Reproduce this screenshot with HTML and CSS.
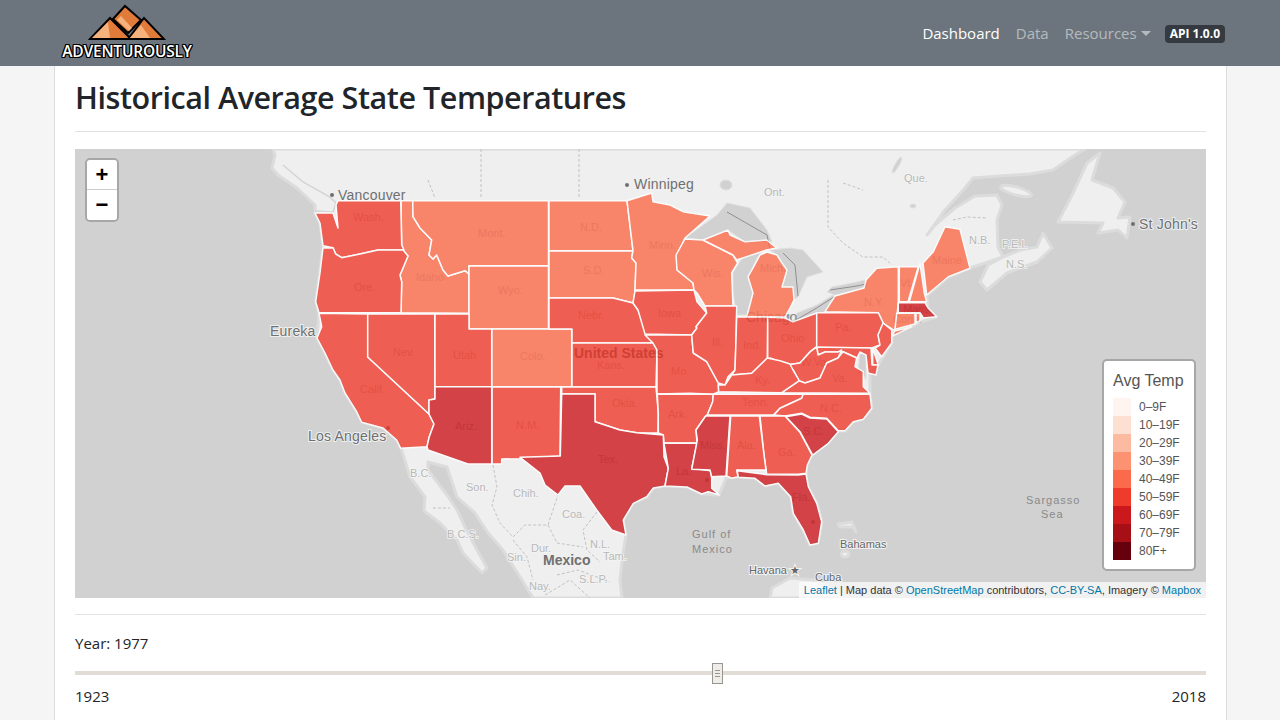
FILE: index.html
```html
<!DOCTYPE html>
<html lang="en">
<head>
    <meta charset="UTF-8">
    <meta name="viewport" content="width=device-width, initial-scale=1.0">
    <title>Historical Average State Temperatures</title>
    <link rel="stylesheet" href="styles.css">
</head>
<body>
    <!-- Top navigation -->
    <nav class="navbar">
        <a class="brand" href="#">
            <svg class="brand-mark" viewBox="88 4 78 37" width="78" height="37">
                <polygon class="peak" points="113,19 125,6 141,20 128,33"/>
                <polygon class="peak-light" points="117,20 121,16 132,28 129,31"/>
                <polygon class="peak" points="90,39 110,18 131,39"/>
                <polygon class="peak-light" points="92,38 108,22 110,38"/>
                <polygon class="peak" points="128,39 144,18 164,39"/>
                <polygon class="peak-light" points="130,38 141,25 150,38"/>
            </svg>
            <span class="brand-name">ADVENTUROUSLY</span>
        </a>
        <ul class="nav-links">
            <li><a class="nav-link active" href="#">Dashboard</a></li>
            <li><a class="nav-link" href="#">Data</a></li>
            <li><a class="nav-link dropdown" href="#">Resources</a></li>
            <li><span class="badge">API 1.0.0</span></li>
        </ul>
    </nav>

    <main class="content">
        <h1>Historical Average State Temperatures</h1>
        <hr class="rule-top">

        <!-- Choropleth map -->
        <div class="map">
            <svg class="map-svg" viewBox="75 149 1131 449" width="1131" height="449">
                <g class="land">
                    <polygon points="273,149 275,155 272,168 278,175 297,188 315,205 315,213 320,223 323,246 316,300 319,313 317,338 325,353 333,370 340,380 345,393 357,412 362,422 383,428 397,440 401,448 410,477 425,497 424,511 440,523 457,540 463,553 482,573 487,568 477,550 465,527 457,510 447,495 428,470 428,462 447,467 457,497 475,513 488,533 503,550 520,577 533,598 622,598 620,580 623,553 626,535 623,520 633,503 647,497 653,488 665,486 687,487 702,494 719,495 726,478 738,477 755,478 765,486 778,483 791,497 793,513 803,530 810,545 818,543 822,522 817,503 808,487 806,474 807,465 812,455 828,443 838,431 845,431 853,422 863,419 872,408 870,394 870,372 878,365 883,357 892,343 892,330 911,327 920,322 936,317 928,308 927,296 948,277 970,268 988,262 1003,257 998,247 997,220 1002,205 997,195 975,196 955,208 935,225 927,235 945,210 965,188 973,178 1000,176 1030,174 1053,170 1075,155 1085,149"/>
                    <polygon points="980,282 987,290 1007,273 1037,262 1052,248 1043,233 1037,247 1020,250 1003,257 988,265"/>
                    <polygon points="1087,163 1100,153 1092,180 1113,188 1125,202 1118,218 1130,217 1127,238 1118,230 1098,233 1103,223 1058,222 1073,193"/>
                    <ellipse cx="1016" cy="191" rx="16" ry="4" transform="rotate(15 1016 191)"/>
                    <polygon points="770,598 772,588 790,578 815,580 835,590 850,598"/>
                    <polygon points="838,524 852,522 856,532 853,527 840,527"/>
                    <ellipse cx="845" cy="554" rx="4" ry="3"/>
                </g>

                <!-- Lakes and straits -->
                <g class="water">
                    <polygon points="685,238 717,215 727,203 750,208 767,230 772,242 745,242 728,230 703,240"/>
                    <polygon points="770,250 790,248 803,250 823,272 807,277 798,297 793,300 793,287 782,287 787,270 782,263 777,255"/>
                    <polygon points="733,272 743,257 763,250 757,258 748,277 753,293 747,315 737,315 733,293"/>
                    <polygon points="793,322 797,313 817,305 833,295 835,297 825,312 817,313"/>
                    <polygon points="827,292 832,287 857,282 865,280 867,287 857,290 835,295"/>
                    <circle cx="789" cy="317" r="3"/>
                    <polygon points="860,350 866,352 866,380 862,372 858,375"/>
                    <ellipse cx="726" cy="185" rx="6" ry="5"/>
                    <ellipse cx="913" cy="206" rx="3" ry="2"/>
                    <ellipse cx="897" cy="165" rx="2" ry="9" transform="rotate(30 897 165)"/>
                </g>
                <polyline class="strait" points="283,165 303,182 330,197 336,203 333,212 315,211"/>

                <!-- Borders that show through the tiles -->
                <g class="lake-line">
                    <polyline points="727,212 767,235 770,250"/>
                    <polyline points="783,253 795,265 798,296"/>
                    <polyline points="796,320 815,309 834,297"/>
                    <polyline points="830,290 857,286 866,284"/>
                </g>
                <g class="border-line">
                    <polyline points="481,149 481,198"/>
                    <polyline points="579,149 579,198"/>
                    <polyline points="428,180 435,198"/>
                    <polyline points="828,180 828,227 843,243 863,257 883,257 892,265"/>
                    <polyline points="843,183 863,190"/>
                    <polyline points="953,220 967,217 987,218"/>
                    <polyline points="493,465 497,487 492,505 500,523 513,537 525,525 548,525 558,495"/>
                    <polyline points="597,512 583,530 587,550 600,562"/>
                    <polyline points="548,525 557,543 583,547"/>
                    <polyline points="433,508 450,508"/>
                    <polyline points="513,540 527,557 533,580"/>
                    <polyline points="557,575 578,570 610,582"/>
                    <polyline points="545,595 570,580 590,598"/>
                </g>

                <!-- Tile labels, drawn before the states so the fill tints them -->
                <g class="place">
                    <circle cx="332" cy="195" r="2"/>
                    <circle cx="627" cy="185" r="2"/>
                    <circle cx="1133" cy="224" r="2"/>
                    <text x="338" y="200">Vancouver</text>
                    <text x="634" y="189">Winnipeg</text>
                    <text x="1139" y="229">St John's</text>
                    <text x="270" y="336">Eureka</text>
                    <text x="308" y="441">Los Angeles</text>
                </g>
                <g class="sea">
                    <text x="692" y="538">Gulf of</text>
                    <text x="692" y="553">Mexico</text>
                    <text x="1026" y="504">Sargasso</text>
                    <text x="1041" y="518">Sea</text>
                </g>
                <g class="town">
                    <text x="840" y="548">Bahamas</text>
                    <text x="749" y="574">Havana ★</text>
                    <text x="815" y="581">Cuba</text>
                </g>
                <text class="country" x="543" y="565">Mexico</text>
                <text class="country country-us" x="574" y="358">United States</text>
                <text class="country country-city" x="746" y="322">Chicago</text>
                <g class="region">
                    <text x="764" y="196">Ont.</text>
                    <text x="904" y="182">Que.</text>
                    <text x="969" y="244">N.B.</text>
                    <text x="1002" y="248">P.E.I.</text>
                    <text x="1006" y="268">N.S.</text>
                    <text x="466" y="491">Son.</text>
                    <text x="513" y="497">Chih.</text>
                    <text x="410" y="477">B.C.</text>
                    <text x="562" y="518">Coa.</text>
                    <text x="447" y="538">B.C.S.</text>
                    <text x="531" y="552">Dur.</text>
                    <text x="590" y="548">N.L.</text>
                    <text x="603" y="560">Tam.</text>
                    <text x="507" y="561">Sin.</text>
                    <text x="579" y="583">S.L.P.</text>
                    <text x="529" y="590">Nay.</text>
                </g>
                <g class="region region-us">
                    <text x="353" y="221">Wash.</text>
                    <text x="478" y="237">Mont.</text>
                    <text x="580" y="231">N.D.</text>
                    <text x="583" y="274">S.D.</text>
                    <text x="649" y="249">Minn.</text>
                    <text x="702" y="277">Wis.</text>
                    <text x="760" y="272">Mich.</text>
                    <text x="354" y="291">Ore.</text>
                    <text x="416" y="281">Idaho</text>
                    <text x="498" y="294">Wyo.</text>
                    <text x="578" y="319">Nebr.</text>
                    <text x="658" y="317">Iowa</text>
                    <text x="712" y="346">Ill.</text>
                    <text x="743" y="349">Ind.</text>
                    <text x="781" y="342">Ohio</text>
                    <text x="835" y="331">Pa.</text>
                    <text x="864" y="306">N.Y.</text>
                    <text x="900" y="287">Vt.</text>
                    <text x="932" y="264">Maine</text>
                    <text x="903" y="313">Mass.</text>
                    <text x="893" y="323">Conn.</text>
                    <text x="360" y="393">Calif.</text>
                    <text x="393" y="356">Nev.</text>
                    <text x="453" y="359">Utah</text>
                    <text x="520" y="360">Colo.</text>
                    <text x="597" y="369">Kans.</text>
                    <text x="671" y="375">Mo.</text>
                    <text x="755" y="384">Ky.</text>
                    <text x="801" y="366">W.Va.</text>
                    <text x="832" y="382">Va.</text>
                    <text x="742" y="406">Tenn.</text>
                    <text x="820" y="412">N.C.</text>
                    <text x="803" y="435">S.C.</text>
                    <text x="455" y="430">Ariz.</text>
                    <text x="516" y="429">N.M.</text>
                    <text x="612" y="407">Okla.</text>
                    <text x="668" y="418">Ark.</text>
                    <text x="598" y="463">Tex.</text>
                    <text x="676" y="475">La.</text>
                    <text x="700" y="449">Miss.</text>
                    <text x="737" y="449">Ala.</text>
                    <text x="778" y="456">Ga.</text>
                    <text x="792" y="501">Fla.</text>
                </g>

                <g class="states">
                    <!-- 30-39F -->
                    <g class="temp-30">
                        <polygon points="401,200.7 412.7,200.7 413,216.7 420,228 431.7,240 429,255 433,259 436.7,255 443,270 448,276 465,270.7 469,274 469,313.3 401,312.7 401.7,282 400,275 408,256 403,250 401.7,245"/>
                        <polygon points="412.7,200.7 548.5,200.7 548.5,265.7 469,265.7 469,274 465,270.7 448,276 443,270 436.7,255 433,259 429,255 431.7,240 420,228 413,216.7"/>
                        <polygon points="469,266 548.5,266 548.5,329 469,329"/>
                        <polygon points="491.7,329 571.7,329 571.7,386.7 491.7,386.7"/>
                        <polygon points="549,200.7 627,200.7 633,250.7 549,250.7"/>
                        <polygon points="549,251 633,251 631.7,258 636,263 635,291 633,303 613,298 549,298"/>
                        <polygon points="627,200.7 651.7,193 653,201.7 670,205 683,211.7 710,216 685,238 677,255 677,270 693,283 694,290 635,290 636,263 631.7,258 633,250.7"/>
                        <polygon points="685,239 703,240 733,255 737.7,263 731.7,273 733,306 705,306 697,293 694,290 693,283 677,270 676,255"/>
                        <polygon points="703,240 728,230 730,235 745,241.7 766.7,240 776.7,248 766.7,250 736.7,260 733,255"/>
                        <polygon points="746.7,317 753,293 748,276.7 753,268 760,255 767,252 777,255 782,263 787,270 782,287 793,287 794,300 790,308 785,317"/>
                        <polygon points="825,311.7 835,296 864,288 866,280 876.7,268.3 898.3,266.7 898.3,301.7 896,326.7 892.7,336 911.7,326.7 895,331 883.3,323.3 878.3,312.7"/>
                        <polygon points="899.3,266.7 918.3,266.7 908,301.7 899.3,301.7"/>
                        <polygon points="920,263.3 924.3,293 926.7,301.7 909.3,301.7"/>
                        <polygon points="923,263 933.3,251.7 945,226.7 960,229.3 970,268.3 948.3,276.7 926.7,295"/>
                        <polygon points="896.7,313.3 915,313.3 915,324 895,329.3"/>
                        <polygon points="916,313.3 920,313.3 920,320.7 916,323"/>
                    </g>

                    <!-- 50-59F -->
                    <g class="temp-50">
                        <polygon points="338,200.7 400.7,200.7 401.7,245 404,250 378,250 360,254 341.7,257.7 335.7,254 333,247.7 323,245.7 320,223 315,213 333,213 338,228 336,205"/>
                        <polygon points="323,248 333,247.7 335.7,254 341.7,257.7 360,254 378,250 403,250 408,256 400,275 401.7,282 401,312.7 319,312.7 315.7,301.7 320,273"/>
                        <polygon points="319,313.3 367.7,314 367.7,357 429,414 434,424 429.3,436.7 427,446.7 400.7,448.3 396.7,440 383,428 361.7,422.3 356.7,411.7 345,393 340,380 333,370 325,353 317,338 321.7,326.7"/>
                        <polygon points="367.7,314 434.7,314 435,399 429,400 429,414 367.7,357"/>
                        <polygon points="435,314 469,314 469,329 491.7,329 491.7,386.7 435,386.7"/>
                        <polygon points="492,387 560.7,387 560,456 520,458.7 501.7,459 501.7,464 492,464"/>
                        <polygon points="549,298 613,298 633,303 638,310 643,323 648,336.7 653,343 572,343 572,329 549,329"/>
                        <polygon points="572,343 653,343 657,350 656,387 572,387"/>
                        <polygon points="561.7,387 656,387 658.3,413 658,433 636.7,432.7 620,430 595,421.7 595,394 561.7,394"/>
                        <polygon points="635,291 694,290 697,301.7 706.7,313 696,326.7 697,328 691.7,335 645,334 638,310 633,303"/>
                        <polygon points="645,335 691.7,335 693.3,353 706.7,361.7 718.3,383 718.7,391.7 713.3,394.3 690,393.3 657,394 657,350 653,343"/>
                        <polygon points="657.3,394 713.3,394.3 712.7,401.7 707.3,415 705.7,416 696,430 697,443 664,443 663.3,435 658.3,433 658.3,413"/>
                        <polygon points="705,306 736.7,306 736,340 735,370 728,376.7 725,385 718.3,383 706.7,361.7 693.3,353 691.7,335 697,328 696,326.7 706.7,313"/>
                        <polygon points="736.7,317 767.7,317 767.3,358 751.7,373.3 731.7,375 735,370 736,340"/>
                        <polygon points="767.7,317 785,318 793,321.7 816.7,313 816.7,346.7 810,351.7 800,363 786.7,365 770,358 767.7,361.7"/>
                        <polygon points="816.7,312.7 878.3,312.7 883.3,323.3 878.3,335 880,345 871.7,348 816.7,347.7"/>
                        <polygon points="883,323 891.7,330 891.7,343 881.7,356.7 875,348 880,345 878,335"/>
                        <polygon points="872.7,348 878.3,365 872.7,365"/>
                        <polygon points="817,347 871,348 872,365 878,365 876,375 868,373 866,355 860,352 857,358 843,351.7 838,352 825,352 818,355"/>
                        <polygon points="786.7,365 800,363 810,352 816.7,347 818,355 825,352 838,352 841.7,350 838,358 826.7,363 820,378 805,383 799,381 793.3,370"/>
                        <polygon points="781.7,392.7 799.3,380.7 805,383 820,378 826.7,363 838,358 843,351.7 856.7,358 855,366.7 863.3,371.7 863.3,386.7 870,393.3"/>
                        <polygon points="718.7,391.7 781.7,392.7 799.3,380.7 793,370 790,364 780,360.7 767.3,358 751.7,373.3 731.7,375 725,385 718.3,385"/>
                        <polygon points="713.3,394.3 803.3,394 801.7,398.3 780,408.3 773.3,415 707.3,415 712.7,401.7"/>
                        <polygon points="803.3,394.3 870,394.3 871.7,408.3 863.3,419.3 853.3,421.7 845,430.7 838.3,430.7 826.7,418.3 810,417.3 801.7,413.3 785,416 774,415 780,408.3 801.7,398.3"/>
                        <polygon points="760,416 785,416 800,432.3 812,455 807.3,465 806,473.3 798.3,474.3 766.7,474 764,455"/>
                        <polygon points="730.7,416 759.3,416 764,455 766,470 736.7,470 738,476.7 731.7,478.3 726.7,476"/>
                    </g>

                    <!-- 60-69F -->
                    <g class="temp-60">
                        <polygon points="435,386.7 491.7,386.7 491.7,464 468,464 428,450 427,446.7 429.3,436.7 434,424 429,414 429,400 435,399"/>
                        <polygon points="561.7,394 595,394 595,421.7 620,430 636.7,432.7 663.3,435 664,456.7 668.3,468.3 665,486 653.3,488 646.7,496.7 633.3,503.3 623.3,520 626,535 611.7,530 596.7,510 580,486 565,486 558,495 545,485 540,473 520,457.3 560.3,456"/>
                        <polygon points="664,443.3 697,443.3 691.7,468.3 710.7,470.7 711.7,478.3 711.7,488.3 719.3,495 708.3,491.7 701.7,494 687,487 665,486 668.3,468.3"/>
                        <polygon points="705.7,416 730,416 726,476 711.7,476.7 710,470 691.7,469.3 697.3,440 696,430"/>
                        <polygon points="786,416.7 801.7,414 810,418 826.7,419 838.3,431.7 828.3,443.3 812.7,455 800,431.7"/>
                        <polygon points="737.3,470.7 766.7,474.7 798.3,475 806,474 808.3,486.7 816.7,503.3 821.7,521.7 818.3,543.3 810,545 803.3,530 793.3,513.3 790.7,496.7 778.3,483.3 765,486 755,478.3 738.3,477.3"/>
                        <polygon points="898.3,302.7 925,302.7 928.3,308.3 936.7,316.7 923.3,318 920,312.7 898.3,312.7"/>
                    </g>
                </g>

                <!-- City blots in the tiles, on top of the fill -->
                <circle class="blot" cx="388" cy="428" r="2"/>
                <circle class="blot" cx="707" cy="480" r="2"/>
                <circle class="blot" cx="813" cy="522" r="2"/>
            </svg>

            <div class="zoom-control">
                <a class="zoom-btn" href="#">+</a>
                <a class="zoom-btn" href="#">&minus;</a>
            </div>

            <div class="legend">
                <h4>Avg Temp</h4>
                <div class="legend-row"><i class="swatch swatch-0"></i>0&ndash;9F</div>
                <div class="legend-row"><i class="swatch swatch-1"></i>10&ndash;19F</div>
                <div class="legend-row"><i class="swatch swatch-2"></i>20&ndash;29F</div>
                <div class="legend-row"><i class="swatch swatch-3"></i>30&ndash;39F</div>
                <div class="legend-row"><i class="swatch swatch-4"></i>40&ndash;49F</div>
                <div class="legend-row"><i class="swatch swatch-5"></i>50&ndash;59F</div>
                <div class="legend-row"><i class="swatch swatch-6"></i>60&ndash;69F</div>
                <div class="legend-row"><i class="swatch swatch-7"></i>70&ndash;79F</div>
                <div class="legend-row"><i class="swatch swatch-8"></i>80F+</div>
            </div>

            <div class="attribution">
                <a href="#">Leaflet</a> | Map data &copy; <a href="#">OpenStreetMap</a> contributors, <a href="#">CC-BY-SA</a>, Imagery &copy; <a href="#">Mapbox</a>
            </div>
        </div>

        <hr class="rule-bottom">

        <!-- Year slider -->
        <p class="year">Year: 1977</p>
        <div class="slider">
            <span class="slider-handle" style="left: 56.8%"><i></i><i></i><i></i></span>
        </div>
        <div class="slider-range">
            <span>1923</span>
            <span>2018</span>
        </div>
    </main>
</body>
</html>
```

FILE: styles.css
```css
* {
    box-sizing: border-box;
}
html, body {
    height: 720px;
    overflow: hidden;
}
body {
    margin: 0;
    background-color: #f5f5f5;
    color: #212529;
    font-family: "Open Sans", "Noto Sans", sans-serif;
    font-size: 15px;
}
a {
    text-decoration: none;
}

/* Navbar */
.navbar {
    display: flex;
    align-items: center;
    justify-content: space-between;
    height: 66px;
    padding: 0 55px 0 61px;
    background-color: #6c757d;
}
.brand {
    display: flex;
    flex-direction: column;
    align-items: center;
    align-self: flex-start;
    width: 132px;
    padding-top: 4px;
}
.brand-mark {
    display: block;
    margin-bottom: 2px;
}
.peak {
    fill: #e07b39;
    stroke: #000;
    stroke-width: 2;
    stroke-linejoin: miter;
}
.peak-light {
    fill: #f5b27c;
}
.brand-name {
    color: #fff;
    font-size: 15.5px;
    font-weight: 600;
    line-height: 16px;
    letter-spacing: -0.2px;
    white-space: nowrap;
    text-shadow: 1px 0 0 #000, -1px 0 0 #000, 0 1px 0 #000, 0 -1px 0 #000, 1px 1px 0 #000, -1px -1px 0 #000, 1px -1px 0 #000, -1px 1px 0 #000;
}
.nav-links {
    display: flex;
    align-items: center;
    gap: 16px;
    margin: 0;
    padding: 0;
    list-style: none;
}
.nav-links li:last-child {
    margin-left: -2px;
}
.nav-link {
    color: rgba(255, 255, 255, 0.5);
    font-size: 15px;
}
.nav-link.active {
    color: #fff;
}
.dropdown::after {
    content: "";
    display: inline-block;
    margin-left: 4px;
    vertical-align: 3px;
    border-top: 5px solid;
    border-left: 5px solid transparent;
    border-right: 5px solid transparent;
}
.badge {
    display: block;
    margin-top: 1px;
    padding: 2px 5px;
    border-radius: 4px;
    background-color: #343a40;
    color: #fff;
    font-size: 12px;
    font-weight: 700;
    line-height: 14px;
}

/* Main column */
.content {
    width: 1173px;
    height: 654px;
    margin-left: 54px;
    padding: 0 20px;
    background-color: #fff;
    border-left: 1px solid #ddd;
    border-right: 1px solid #ddd;
}
h1 {
    margin: 0;
    padding-top: 7px;
    font-size: 30.5px;
    font-weight: 600;
    line-height: 48px;
    letter-spacing: -0.45px;
}
hr {
    height: 1px;
    margin: 0;
    border: 0;
    background-color: #e2e2e2;
}
.rule-top {
    margin: 10px 0 17px;
}
.rule-bottom {
    margin-top: 16px;
}

/* Map */
.map {
    position: relative;
    height: 449px;
    overflow: hidden;
    background-color: #d1d1d1;
}
.map-svg {
    display: block;
}
.land {
    fill: #efefef;
    stroke: #dcdcdc;
    stroke-width: 3;
    stroke-linejoin: round;
}
.water {
    fill: #d1d1d1;
    stroke: #e0e0e0;
    stroke-width: 1;
}
.strait {
    fill: none;
    stroke: #d4d4d4;
    stroke-width: 1.5;
}
.lake-line {
    fill: none;
    stroke: #8f8f8f;
    stroke-width: 1;
}
.border-line {
    fill: none;
    stroke: #c2c2c2;
    stroke-width: 1;
    stroke-dasharray: 3 2;
}
.map-svg text {
    font-family: "Liberation Sans", Arial, sans-serif;
}
.place {
    fill: #6f6f6f;
    font-size: 14px;
}
.place text {
    stroke: #efefef;
    stroke-width: 2px;
    paint-order: stroke;
    letter-spacing: 0.2px;
}
.sea {
    fill: #8a8a8a;
    font-size: 11px;
    letter-spacing: 1px;
}
.town {
    fill: #666;
    font-size: 11px;
}
.town text {
    stroke: #f2f2f2;
    stroke-width: 2px;
    paint-order: stroke;
}
.country {
    fill: #707070;
    font-size: 14px;
    font-weight: 700;
    stroke: #efefef;
    stroke-width: 2px;
    paint-order: stroke;
}
.country-us {
    fill: #555;
    stroke: none;
}
.country-city {
    fill: #888;
    font-weight: 400;
    stroke: none;
}
.region {
    fill: #b8b8b8;
    font-size: 11px;
}
.region text {
    stroke: #f4f4f4;
    stroke-width: 1.5px;
    paint-order: stroke;
}
.region-us {
    fill: #adadad;
}
.region-us text {
    stroke: none;
}
/* opacity sits on the whole group so shared borders don't darken twice */
.states {
    opacity: 0.8;
}
.states polygon {
    stroke: #fff;
    stroke-width: 1.5;
    stroke-linejoin: round;
}
.temp-30 polygon {
    fill: #fb6a4a;
}
.temp-50 polygon {
    fill: #ef3b2c;
}
.temp-60 polygon {
    fill: #cb181d;
}
.blot {
    fill: #b8232a;
    opacity: 0.5;
}

/* Leaflet style controls */
.zoom-control {
    position: absolute;
    top: 9px;
    left: 10px;
    display: flex;
    flex-direction: column;
    border: 2px solid rgba(0, 0, 0, 0.2);
    border-radius: 5px;
    background-clip: padding-box;
}
.zoom-btn {
    width: 30px;
    height: 30px;
    background-color: #fff;
    color: #000;
    font: 700 22px/30px "Liberation Sans", Arial, sans-serif;
    text-align: center;
}
.zoom-btn:first-child {
    border-bottom: 1px solid #ccc;
    border-radius: 3px 3px 0 0;
}
.zoom-btn:last-child {
    border-radius: 0 0 3px 3px;
}
.legend {
    position: absolute;
    top: 210px;
    right: 10px;
    width: 94px;
    height: 212px;
    padding: 10px 9px 0;
    border: 2px solid rgba(0, 0, 0, 0.2);
    border-radius: 5px;
    background-color: #fff;
    background-clip: padding-box;
    color: #555;
    font-family: "Liberation Sans", Arial, sans-serif;
    font-size: 12px;
}
.legend h4 {
    margin: 0 0 7px;
    font-size: 16px;
    font-weight: 400;
    line-height: 20px;
    white-space: nowrap;
}
.legend-row {
    display: flex;
    align-items: center;
    gap: 8px;
    height: 18px;
}
.swatch {
    width: 18px;
    height: 18px;
}
.swatch-0 { background-color: #fff5f0; }
.swatch-1 { background-color: #fee0d2; }
.swatch-2 { background-color: #fcbba1; }
.swatch-3 { background-color: #fc9272; }
.swatch-4 { background-color: #fb6a4a; }
.swatch-5 { background-color: #ef3b2c; }
.swatch-6 { background-color: #cb181d; }
.swatch-7 { background-color: #a50f15; }
.swatch-8 { background-color: #67000d; }
.attribution {
    position: absolute;
    right: 0;
    bottom: 0;
    padding: 0 5px;
    background-color: rgba(255, 255, 255, 0.7);
    color: #333;
    font-family: "Liberation Sans", Arial, sans-serif;
    font-size: 11px;
    line-height: 16px;
}
.attribution a {
    color: #0078a8;
}

/* Year slider */
.year {
    margin: 18px 0 0;
    line-height: 20px;
}
.slider {
    position: relative;
    height: 4px;
    margin-top: 18px;
    background-color: #e2dcd6;
}
.slider-handle {
    position: absolute;
    top: -8px;
    width: 11px;
    height: 21px;
    margin-left: -5px;
    padding-top: 6px;
    border: 1px solid #9a968f;
    background-color: #efedea;
}
.slider-handle i {
    display: block;
    height: 1px;
    margin: 0 2px 2px;
    background-color: #9a968f;
}
.slider-range {
    display: flex;
    justify-content: space-between;
    margin-top: 11px;
    line-height: 20px;
}
```
